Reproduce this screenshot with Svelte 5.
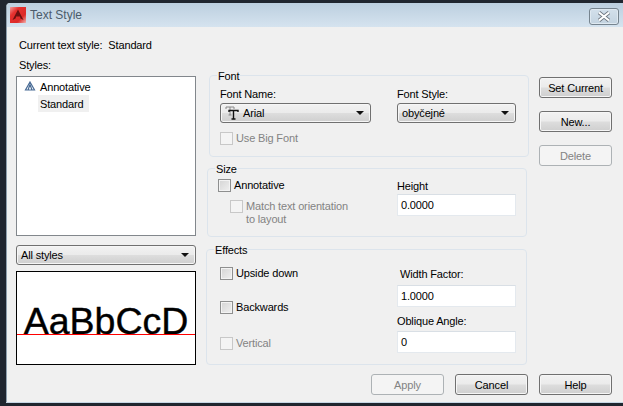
<script>
  const styles = ['Annotative', 'Standard'];
</script>

<div class="window">
  <header class="titlebar">
    <svg class="logo" width="16" height="16" viewBox="0 0 16 16">
      <defs>
        <linearGradient id="logo-bg" x1="0" y1="0" x2="1" y2="1">
          <stop offset="0" stop-color="#f0a0a0" />
          <stop offset="0.3" stop-color="#e6302e" />
          <stop offset="0.7" stop-color="#dc2a28" />
          <stop offset="1" stop-color="#f3b4b0" />
        </linearGradient>
      </defs>
      <rect width="16" height="16" fill="url(#logo-bg)" />
      <path d="M8 2.5 L13.5 13 L10.5 11.5 L10 9.5 L6.2 9.5 L5.5 11.5 L2.5 13 Z" fill="#6d1010" />
    </svg>
    <span class="title">Text Style</span>
    <button class="close" aria-label="Close">
      <svg width="16" height="11" viewBox="0 0 16 11">
        <path d="M3 1.5 L13 9.5 M13 1.5 L3 9.5" stroke="#6f7780" stroke-width="3.8" />
        <path d="M3 1.5 L13 9.5 M13 1.5 L3 9.5" stroke="#fff" stroke-width="2.2" />
      </svg>
    </button>
  </header>

  <div class="body">
    <div class="current"><span>Current text style:</span><span>Standard</span></div>

    <div class="main">
      <div class="left">
        <div class="styles-label">Styles:</div>
        <ul class="list">
          {#each styles as s, i}
            <li class:selected={i === 1}>
              {#if i === 0}
                <svg class="annot" width="12" height="10" viewBox="0 0 12 10">
                  <path d="M6 1 L10.5 9 L1.5 9 Z M6 3.5 L8 9 M6 3.5 L4 9" fill="none" stroke="#4a6c96" stroke-width="1.2" />
                </svg>
              {/if}
              <span>{s}</span>
            </li>
          {/each}
        </ul>
        <div class="combo filter"><span>All styles</span><i class="arrow"></i></div>
        <div class="preview">
          <span>AaBbCcD</span>
          <div class="baseline"></div>
        </div>
      </div>

      <div class="middle">
        <section class="group font">
          <span class="legend">Font</span>
          <div class="font-row">
            <div>
              <div class="field-label">Font Name:</div>
              <div class="combo name">
                <svg width="15" height="14" viewBox="0 0 15 14">
                  <path d="M1 3 V1 H9 V3 M5 1 V9 M3.5 9 H6.5" fill="none" stroke="#888" />
                  <path d="M4 6 V4.5 H13 V6 M8.5 4.5 V13 M6.5 13 H10.5" fill="none" stroke="#111" stroke-width="1.4" />
                </svg>
                <span>Arial</span><i class="arrow"></i>
              </div>
            </div>
            <div>
              <div class="field-label">Font Style:</div>
              <div class="combo fstyle"><span>obyčejné</span><i class="arrow"></i></div>
            </div>
          </div>
          <label class="check disabled bigfont"><i class="box"></i><span>Use Big Font</span></label>
        </section>

        <section class="group size">
          <span class="legend">Size</span>
          <div class="size-left">
            <label class="check"><i class="box"></i><span>Annotative</span></label>
            <label class="check disabled match"><i class="box"></i><span>Match text orientation<br />to layout</span></label>
          </div>
          <div class="size-right">
            <div class="field-label">Height</div>
            <div class="input">0.0000</div>
          </div>
        </section>

        <section class="group effects">
          <span class="legend">Effects</span>
          <div class="checks">
            <label class="check"><i class="box"></i><span>Upside down</span></label>
            <label class="check"><i class="box"></i><span>Backwards</span></label>
            <label class="check disabled vertical"><i class="box"></i><span>Vertical</span></label>
          </div>
          <div class="values">
            <div class="field-label width">Width Factor:</div>
            <div class="input">1.0000</div>
            <div class="field-label oblique">Oblique Angle:</div>
            <div class="input">0</div>
          </div>
        </section>
      </div>

      <div class="right">
        <button class="btn">Set Current</button>
        <button class="btn">New...</button>
        <button class="btn" disabled>Delete</button>
      </div>
    </div>

    <footer class="footer">
      <button class="btn" disabled>Apply</button>
      <button class="btn">Cancel</button>
      <button class="btn">Help</button>
    </footer>
  </div>
</div>

<style>
  :global(body) {
    background-color: #20262f;
    height: 406px;
    overflow: hidden;
  }
  .window {
    margin: 3px 0 0 6px;
    width: 617px;
    height: 399px;
    border-left: 1px solid #8fa0ae;
    border-radius: 4px 0 0 0;
    background: #f0f0f0;
    font: 11px/14px "Liberation Sans", Arial, sans-serif;
    letter-spacing: -0.15px;
    color: #000;
    box-sizing: border-box;
    overflow: hidden;
    box-shadow: 0 1px 0 #c6d6e4;
  }
  .titlebar {
    height: 24px;
    display: flex;
    align-items: center;
    padding-left: 3px;
    background: linear-gradient(#bccfdf, #d5e3ef);
    box-sizing: border-box;
  }
  .logo {
    flex-shrink: 0;
    margin-right: 4px;
  }
  .title {
    color: #4b5c6b;
    font-size: 12px;
    letter-spacing: 0;
  }
  .close {
    margin-left: auto;
    margin-right: 4px;
    margin-top: 3px;
    width: 30px;
    height: 17px;
    padding: 0;
    display: flex;
    align-items: center;
    justify-content: center;
    border: 1px solid #76848f;
    border-radius: 3px;
    background: linear-gradient(#d3e0eb, #c3d3e0);
    box-shadow: inset 0 0 0 1px #dfe9f1;
  }
  .body {
    padding: 11px 0 0 9px;
  }
  .current {
    display: flex;
    gap: 6px;
    padding-left: 3px;
  }
  .main {
    display: flex;
    margin-top: 6px;
  }
  .left {
    width: 180px;
    flex-shrink: 0;
  }
  .styles-label {
    padding-left: 3px;
  }
  .list {
    list-style: none;
    margin: 4px 0 0;
    padding: 1px 0 0 8px;
    width: 180px;
    height: 160px;
    box-sizing: border-box;
    background: #fff;
    border: 1px solid #82878c;
  }
  .list li {
    display: flex;
    align-items: center;
    height: 17px;
    padding-left: 13px;
    position: relative;
  }
  .list li span {
    padding: 0 2px;
  }
  .list li.selected span {
    background: #f0f0f0;
    padding: 2px 6px 1px 2px;
  }
  .annot {
    position: absolute;
    left: -1px;
    top: 3px;
  }
  .combo {
    display: flex;
    align-items: center;
    gap: 3px;
    box-sizing: border-box;
    height: 20px;
    padding: 0 4px;
    border: 1px solid #707070;
    border-radius: 3px;
    background: linear-gradient(#f2f2f2, #ebebeb 48%, #dddddd 52%, #cfcfcf);
    box-shadow: inset 0 0 0 1px #f6f6f6;
  }
  .arrow {
    margin-left: auto;
    margin-right: 2px;
    width: 0;
    height: 0;
    border-left: 4px solid transparent;
    border-right: 4px solid transparent;
    border-top: 4px solid #111;
  }
  .filter {
    margin-top: 9px;
    width: 180px;
  }
  .preview {
    position: relative;
    margin-top: 6px;
    width: 180px;
    height: 94px;
    box-sizing: border-box;
    border: 1px solid #000;
    background: #fff;
    overflow: hidden;
    text-align: center;
    font-size: 37.5px;
    letter-spacing: 0;
    line-height: 40px;
    padding-top: 29px;
    -webkit-text-stroke: 0.4px #000;
  }
  .baseline {
    position: absolute;
    left: 0;
    right: 0;
    top: 62px;
    height: 1px;
    background: #f00;
  }
  .middle {
    margin: 17px 0 0 10px;
    width: 322px;
    flex-shrink: 0;
  }
  .group {
    position: relative;
    box-sizing: border-box;
    border: 1px solid #dce4ec;
    border-radius: 4px;
  }
  .legend {
    position: absolute;
    top: -7px;
    left: 7px;
    padding: 0 1px;
    background: #f0f0f0;
  }
  .font {
    margin-left: 3px;
    width: 320px;
    height: 82px;
    padding: 11px 0 0 10px;
  }
  .font-row {
    display: flex;
    gap: 26px;
  }
  .field-label {
    height: 14px;
    margin-bottom: 2px;
  }
  .name {
    width: 151px;
  }
  .name svg {
    flex-shrink: 0;
  }
  .fstyle {
    width: 119px;
  }
  .check {
    display: flex;
    gap: 3px;
    line-height: 13px;
  }
  .box {
    flex-shrink: 0;
    width: 13px;
    height: 13px;
    box-sizing: border-box;
    border: 1px solid #8e8f8f;
    background: linear-gradient(135deg, #d4d4d4, #f0f0f0);
    box-shadow: inset 0 0 0 1px #f3f3f3;
  }
  .check.disabled {
    color: #838383;
  }
  .check.disabled .box {
    border-color: #c8c8c8;
    background: #f4f4f4;
    box-shadow: none;
  }
  .bigfont {
    margin-top: 9px;
  }
  .size {
    margin: 11px 0 0 1px;
    width: 320px;
    height: 69px;
    padding: 10px 0 0 10px;
    display: flex;
  }
  .size-left {
    width: 179px;
  }
  .match {
    margin: 8px 0 0 12px;
  }
  .size-right .field-label {
    margin-bottom: 1px;
  }
  .input {
    box-sizing: border-box;
    width: 119px;
    height: 22px;
    padding: 3px 3px;
    background: #fff;
    border: 1px solid #e4e9ee;
    border-top-color: #d9dfe5;
  }
  .effects {
    margin-top: 12px;
    width: 321px;
    height: 116px;
    padding: 17px 0 0 13px;
    display: flex;
  }
  .checks {
    width: 177px;
    display: flex;
    flex-direction: column;
    gap: 21px;
  }
  .vertical {
    margin-top: 2px;
  }
  .width {
    padding-left: 3px;
    margin-bottom: 4px;
  }
  .oblique {
    margin: 7px 0 3px;
  }
  .right {
    margin: 19px 0 0 11px;
    display: flex;
    flex-direction: column;
    gap: 13px;
  }
  .btn {
    width: 73px;
    height: 21px;
    padding: 0;
    font: inherit;
    letter-spacing: inherit;
    color: #000;
    border: 1px solid #707070;
    border-radius: 3px;
    background: linear-gradient(#f2f2f2, #ebebeb 48%, #dddddd 52%, #cfcfcf);
    box-shadow: inset 0 0 0 1px #f6f6f6;
  }
  .btn:disabled {
    color: #838383;
    border-color: #adb2b5;
    background: #f4f4f4;
    box-shadow: none;
  }
  .footer {
    display: flex;
    justify-content: flex-end;
    gap: 11px;
    margin-top: 9px;
    padding-right: 11px;
  }
</style>
